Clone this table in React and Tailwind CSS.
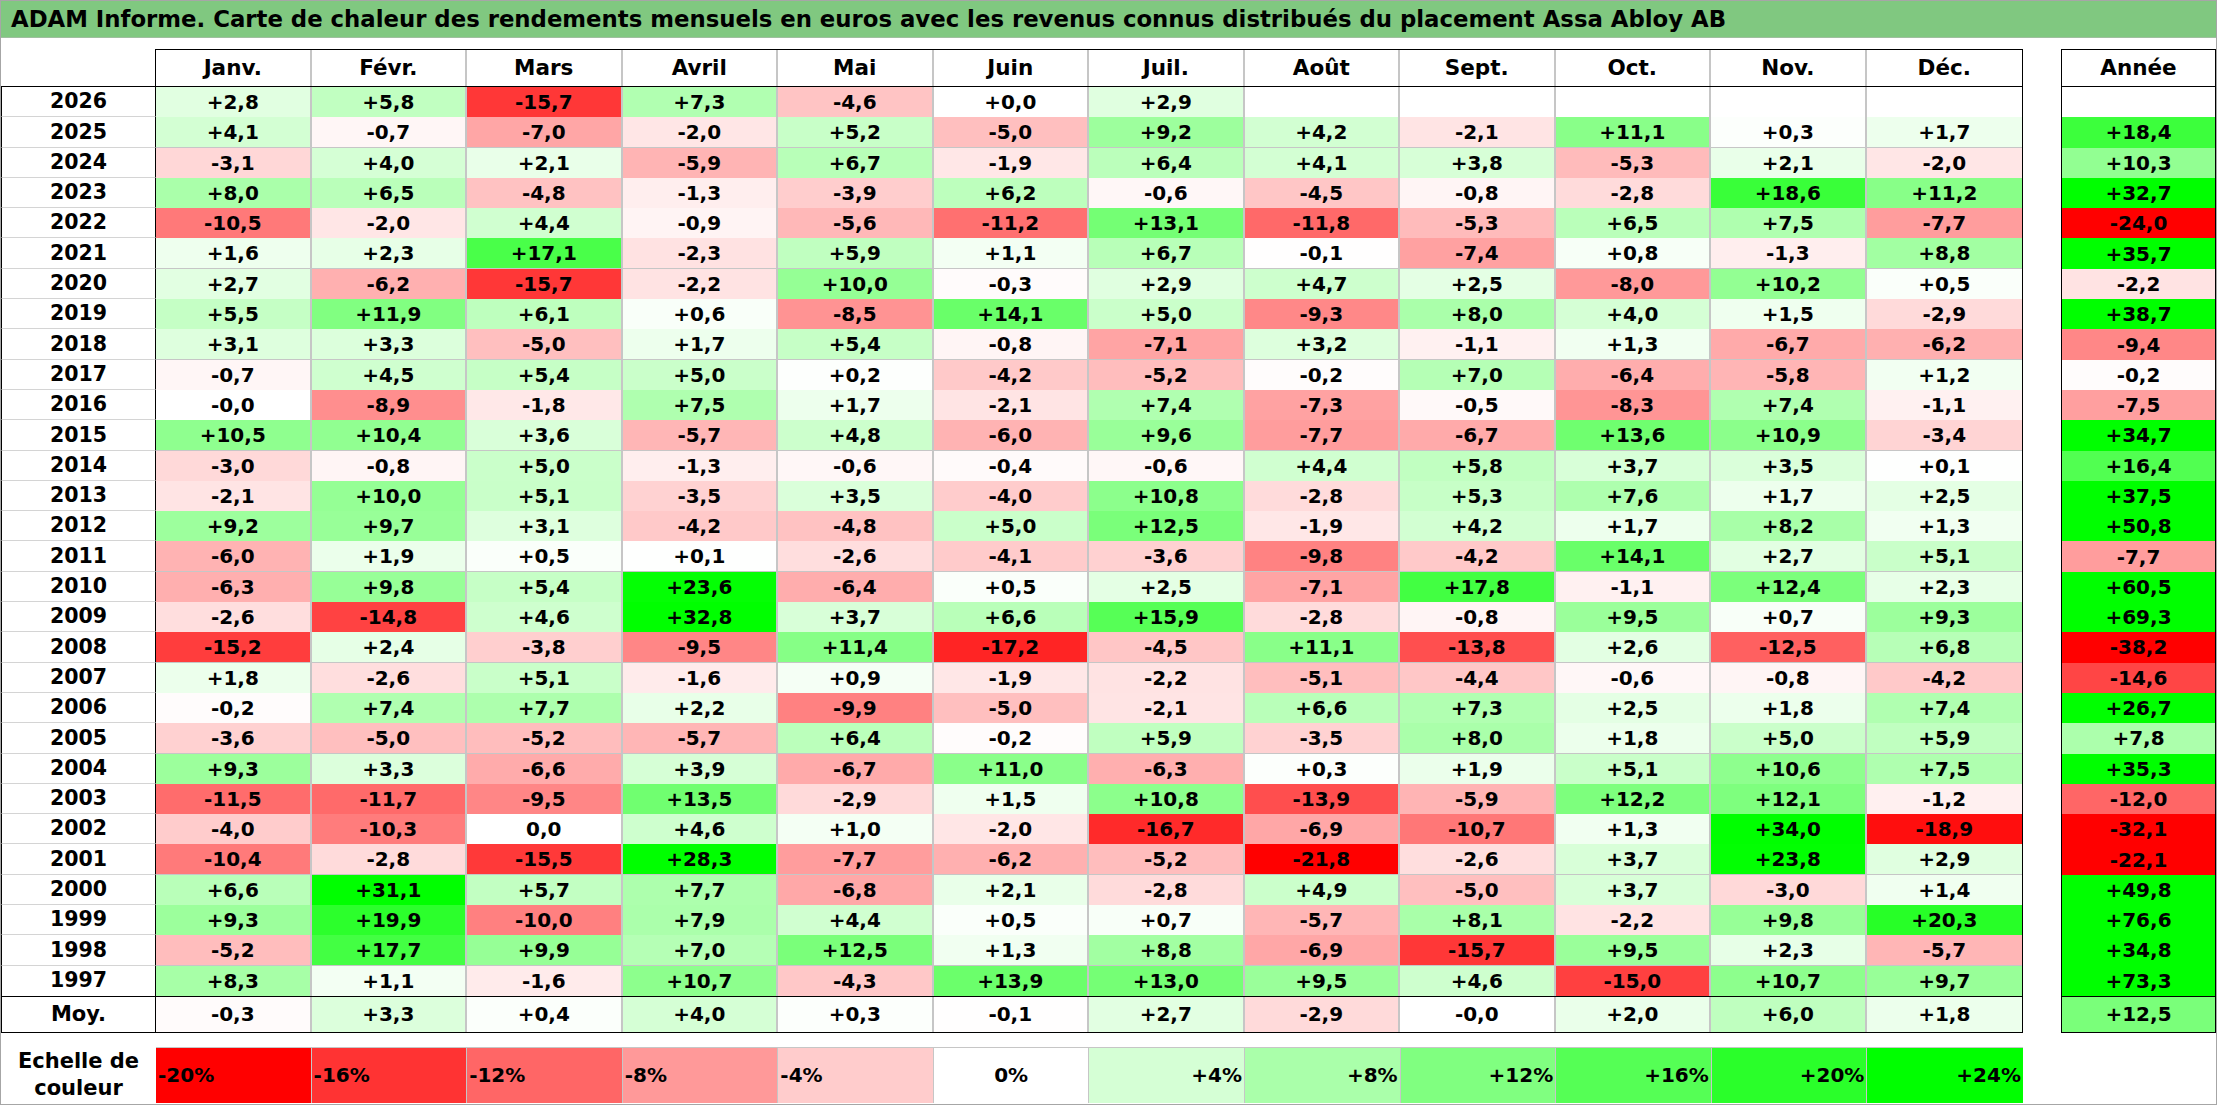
import React from "react";

const MONTHS = ["Janv.", "Févr.", "Mars", "Avril", "Mai", "Juin", "Juil.", "Août", "Sept.", "Oct.", "Nov.", "Déc."];

const RAW = [
  ["2026", "+2,8 +5,8 -15,7 +7,3 -4,6 +0,0 +2,9 _ _ _ _ _", ""],
  ["2025", "+4,1 -0,7 -7,0 -2,0 +5,2 -5,0 +9,2 +4,2 -2,1 +11,1 +0,3 +1,7", "+18,4"],
  ["2024", "-3,1 +4,0 +2,1 -5,9 +6,7 -1,9 +6,4 +4,1 +3,8 -5,3 +2,1 -2,0", "+10,3"],
  ["2023", "+8,0 +6,5 -4,8 -1,3 -3,9 +6,2 -0,6 -4,5 -0,8 -2,8 +18,6 +11,2", "+32,7"],
  ["2022", "-10,5 -2,0 +4,4 -0,9 -5,6 -11,2 +13,1 -11,8 -5,3 +6,5 +7,5 -7,7", "-24,0"],
  ["2021", "+1,6 +2,3 +17,1 -2,3 +5,9 +1,1 +6,7 -0,1 -7,4 +0,8 -1,3 +8,8", "+35,7"],
  ["2020", "+2,7 -6,2 -15,7 -2,2 +10,0 -0,3 +2,9 +4,7 +2,5 -8,0 +10,2 +0,5", "-2,2"],
  ["2019", "+5,5 +11,9 +6,1 +0,6 -8,5 +14,1 +5,0 -9,3 +8,0 +4,0 +1,5 -2,9", "+38,7"],
  ["2018", "+3,1 +3,3 -5,0 +1,7 +5,4 -0,8 -7,1 +3,2 -1,1 +1,3 -6,7 -6,2", "-9,4"],
  ["2017", "-0,7 +4,5 +5,4 +5,0 +0,2 -4,2 -5,2 -0,2 +7,0 -6,4 -5,8 +1,2", "-0,2"],
  ["2016", "-0,0 -8,9 -1,8 +7,5 +1,7 -2,1 +7,4 -7,3 -0,5 -8,3 +7,4 -1,1", "-7,5"],
  ["2015", "+10,5 +10,4 +3,6 -5,7 +4,8 -6,0 +9,6 -7,7 -6,7 +13,6 +10,9 -3,4", "+34,7"],
  ["2014", "-3,0 -0,8 +5,0 -1,3 -0,6 -0,4 -0,6 +4,4 +5,8 +3,7 +3,5 +0,1", "+16,4"],
  ["2013", "-2,1 +10,0 +5,1 -3,5 +3,5 -4,0 +10,8 -2,8 +5,3 +7,6 +1,7 +2,5", "+37,5"],
  ["2012", "+9,2 +9,7 +3,1 -4,2 -4,8 +5,0 +12,5 -1,9 +4,2 +1,7 +8,2 +1,3", "+50,8"],
  ["2011", "-6,0 +1,9 +0,5 +0,1 -2,6 -4,1 -3,6 -9,8 -4,2 +14,1 +2,7 +5,1", "-7,7"],
  ["2010", "-6,3 +9,8 +5,4 +23,6 -6,4 +0,5 +2,5 -7,1 +17,8 -1,1 +12,4 +2,3", "+60,5"],
  ["2009", "-2,6 -14,8 +4,6 +32,8 +3,7 +6,6 +15,9 -2,8 -0,8 +9,5 +0,7 +9,3", "+69,3"],
  ["2008", "-15,2 +2,4 -3,8 -9,5 +11,4 -17,2 -4,5 +11,1 -13,8 +2,6 -12,5 +6,8", "-38,2"],
  ["2007", "+1,8 -2,6 +5,1 -1,6 +0,9 -1,9 -2,2 -5,1 -4,4 -0,6 -0,8 -4,2", "-14,6"],
  ["2006", "-0,2 +7,4 +7,7 +2,2 -9,9 -5,0 -2,1 +6,6 +7,3 +2,5 +1,8 +7,4", "+26,7"],
  ["2005", "-3,6 -5,0 -5,2 -5,7 +6,4 -0,2 +5,9 -3,5 +8,0 +1,8 +5,0 +5,9", "+7,8"],
  ["2004", "+9,3 +3,3 -6,6 +3,9 -6,7 +11,0 -6,3 +0,3 +1,9 +5,1 +10,6 +7,5", "+35,3"],
  ["2003", "-11,5 -11,7 -9,5 +13,5 -2,9 +1,5 +10,8 -13,9 -5,9 +12,2 +12,1 -1,2", "-12,0"],
  ["2002", "-4,0 -10,3 0,0 +4,6 +1,0 -2,0 -16,7 -6,9 -10,7 +1,3 +34,0 -18,9", "-32,1"],
  ["2001", "-10,4 -2,8 -15,5 +28,3 -7,7 -6,2 -5,2 -21,8 -2,6 +3,7 +23,8 +2,9", "-22,1"],
  ["2000", "+6,6 +31,1 +5,7 +7,7 -6,8 +2,1 -2,8 +4,9 -5,0 +3,7 -3,0 +1,4", "+49,8"],
  ["1999", "+9,3 +19,9 -10,0 +7,9 +4,4 +0,5 +0,7 -5,7 +8,1 -2,2 +9,8 +20,3", "+76,6"],
  ["1998", "-5,2 +17,7 +9,9 +7,0 +12,5 +1,3 +8,8 -6,9 -15,7 +9,5 +2,3 -5,7", "+34,8"],
  ["1997", "+8,3 +1,1 -1,6 +10,7 -4,3 +13,9 +13,0 +9,5 +4,6 -15,0 +10,7 +9,7", "+73,3"],
];

const AVG = ["Moy.", "-0,3 +3,3 +0,4 +4,0 +0,3 -0,1 +2,7 -2,9 -0,0 +2,0 +6,0 +1,8", "+12,5"];

const ROWS = RAW.map(([y, m, a]) => ({
  year: y,
  months: m.split(" ").map((s) => (s === "_" ? "" : s)),
  total: a,
}));

function heat(s) {
  if (!s) return "#ffffff";
  const v = parseFloat(s.replace(",", "."));
  if (v < 0) {
    const t = Math.min(1, -v / 20);
    const g = Math.round(255 * (1 - t));
    return `rgb(255,${g},${g})`;
  }
  const t = Math.min(1, v / 24);
  const r = Math.round(255 * (1 - t));
  return `rgb(${r},255,${r})`;
}

const SCALE = [
  { label: "-20%", v: "-20", align: "justify-start pl-[2px]" },
  { label: "-16%", v: "-16", align: "justify-start pl-[2px]" },
  { label: "-12%", v: "-12", align: "justify-start pl-[2px]" },
  { label: "-8%", v: "-8", align: "justify-start pl-[2px]" },
  { label: "-4%", v: "-4", align: "justify-start pl-[2px]" },
  { label: "0%", v: "0", align: "justify-center" },
  { label: "+4%", v: "4", align: "justify-end pr-[2px]" },
  { label: "+8%", v: "8", align: "justify-end pr-[2px]" },
  { label: "+12%", v: "12", align: "justify-end pr-[2px]" },
  { label: "+16%", v: "16", align: "justify-end pr-[2px]" },
  { label: "+20%", v: "20", align: "justify-end pr-[2px]" },
  { label: "+24%", v: "24", align: "justify-end pr-[2px]" },
];

function DataRow({ row, last }) {
  return (
    <div className="flex h-[30.3px]">
      <div
        className={`w-[155px] shrink-0 flex items-center justify-center border-l border-r border-black text-[20.5px] ${
          last ? "" : "border-b border-b-[#d4d4d4]"
        }`}
      >
        {row.year}
      </div>
      <div className="flex-1 grid grid-cols-12 border-r border-black">
        {row.months.map((c, i) => (
          <div
            key={i}
            className={`flex items-center justify-center border-[#c6c6c6] ${i < 11 ? "border-r-2" : ""} ${
              last ? "" : "border-b-2"
            }`}
            style={{ backgroundColor: heat(c) }}
          >
            {c}
          </div>
        ))}
      </div>
      <div className="w-[38px] shrink-0" />
      <div
        className="w-[155px] shrink-0 flex items-center justify-center border-x border-black"
        style={{ backgroundColor: heat(row.total) }}
      >
        {row.total}
      </div>
    </div>
  );
}

export default function App() {
  const avgMonths = AVG[1].split(" ");
  return (
    <div
      className="w-[2217px] h-[1105px] bg-white border border-[#a6a6a6] flex flex-col text-black font-bold text-[20px] overflow-hidden"
      style={{ fontFamily: '"DejaVu Sans", "Liberation Sans", sans-serif' }}
    >
      {/* Title */}
      <div className="h-[37px] shrink-0 bg-[#80c880] border-b border-[#9fbf9f] flex items-center pl-[10px] text-[22.8px] leading-none">
        ADAM Informe. Carte de chaleur des rendements mensuels en euros avec les revenus connus distribués du placement Assa Abloy AB
      </div>
      <div className="h-[11px] shrink-0" />

      {/* Header */}
      <div className="flex h-[38px] shrink-0 text-[21.5px]">
        <div className="w-[155px] shrink-0 border-r border-b border-black" />
        <div className="flex-1 grid grid-cols-12 border-t border-b border-r border-black">
          {MONTHS.map((m, i) => (
            <div
              key={m}
              className={`flex items-center justify-center border-[#c6c6c6] ${i < 11 ? "border-r-2" : ""}`}
            >
              {m}
            </div>
          ))}
        </div>
        <div className="w-[38px] shrink-0" />
        <div className="w-[155px] shrink-0 flex items-center justify-center border border-black">Année</div>
      </div>

      {/* Data rows */}
      {ROWS.map((r, i) => (
        <DataRow key={r.year} row={r} last={i === ROWS.length - 1} />
      ))}

      {/* Average row */}
      <div className="flex h-[37px] shrink-0">
        <div className="w-[155px] shrink-0 flex items-center justify-center border-l border-r border-t border-b border-black text-[21px]">
          Moy.
        </div>
        <div className="flex-1 grid grid-cols-12 border-t border-b border-r border-black">
          {avgMonths.map((c, i) => (
            <div
              key={i}
              className={`flex items-center justify-center border-[#c6c6c6] ${i < 11 ? "border-r-2" : ""}`}
              style={{ backgroundColor: heat(c) }}
            >
              {c}
            </div>
          ))}
        </div>
        <div className="w-[38px] shrink-0" />
        <div
          className="w-[155px] shrink-0 flex items-center justify-center border border-black"
          style={{ backgroundColor: heat(AVG[2]) }}
        >
          {AVG[2]}
        </div>
      </div>

      <div className="h-[14px] shrink-0" />

      {/* Colour scale */}
      <div className="flex h-[56px] shrink-0">
        <div className="w-[155px] shrink-0 flex flex-col items-center justify-center leading-[27px] text-center text-[21px]">
          <span>Echelle de</span>
          <span>couleur</span>
        </div>
        <div className="flex-1 grid grid-cols-12 border-t border-[#c6c6c6]">
          {SCALE.map((s, i) => (
            <div
              key={s.label}
              className={`flex items-center ${s.align} border-[#c6c6c6] ${i < 11 ? "border-r" : ""}`}
              style={{ backgroundColor: heat(s.v) }}
            >
              {s.label}
            </div>
          ))}
        </div>
        <div className="w-[193px] shrink-0" />
      </div>
    </div>
  );
}
